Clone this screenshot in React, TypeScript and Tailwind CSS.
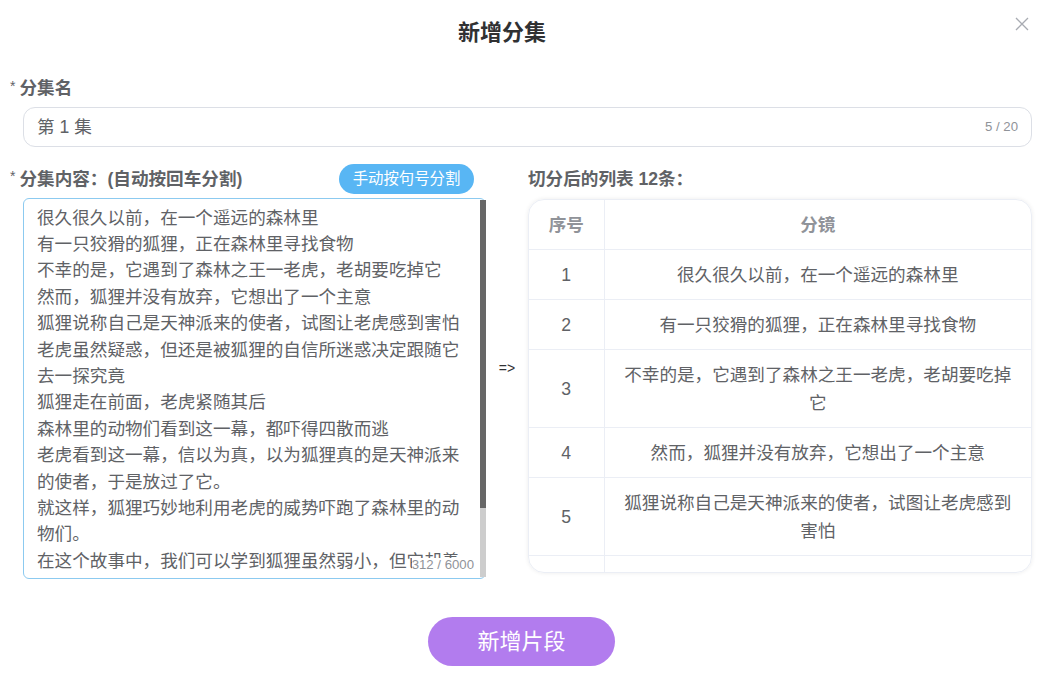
const story = [
  "很久很久以前，在一个遥远的森林里",
  "有一只狡猾的狐狸，正在森林里寻找食物",
  "不幸的是，它遇到了森林之王一老虎，老胡要吃掉它",
  "然而，狐狸并没有放弃，它想出了一个主意",
  "狐狸说称自己是天神派来的使者，试图让老虎感到害怕",
  "老虎虽然疑惑，但还是被狐狸的自信所迷惑决定跟随它去一探究竟",
  "狐狸走在前面，老虎紧随其后",
  "森林里的动物们看到这一幕，都吓得四散而逃",
  "老虎看到这一幕，信以为真，以为狐狸真的是天神派来的使者，于是放过了它。",
  "就这样，狐狸巧妙地利用老虎的威势吓跑了森林里的动物们。",
  "在这个故事中，我们可以学到狐狸虽然弱小，但它却善于利用自己的智慧和勇气，成功地化解了危机。",
  "这个故事告诉我们，聪明才智往往比蛮力更加重要，遇到困难时不要慌张。",
];

export default function App() {
  return (
    <div
      className="w-[1052px] h-[685px] bg-white relative overflow-hidden text-[#606266]"
      style={{ fontFamily: '"Liberation Sans", "Noto Sans CJK SC", sans-serif' }}
    >
      {/* 标题 */}
      <div className="h-[64px] flex items-center justify-center pr-[48px]">
        <h1 className="text-[22px] font-bold text-[#303133]">新增分集</h1>
      </div>
      <button className="absolute top-[16px] right-[22px] w-[16px] h-[16px] text-[#a8abb2]">
        <svg viewBox="0 0 16 16" width="16" height="16" fill="none" stroke="currentColor" strokeWidth="1.3">
          <path d="M2 2 L14 14 M14 2 L2 14" />
        </svg>
      </button>

      {/* 分集名 */}
      <div className="mt-[12px] pl-[10px] flex items-center leading-[24px]">
        <span className="text-[14px] mr-[4px] -mt-[4px]">*</span>
        <span className="text-[17.6px] font-bold">分集名</span>
      </div>
      <div className="mt-[7px] ml-[23px] w-[1009px] h-[40px] rounded-[12px] border border-[#dcdfe6] flex items-center justify-between px-[13px]">
        <span className="text-[17.6px]">第 1 集</span>
        <span className="text-[13.2px] text-[#909399]">5 / 20</span>
      </div>

      {/* 分集内容 */}
      <div className="mt-[17px] flex items-start">
        <div className="w-[486px] flex flex-col">
          <div className="h-[30px] pl-[10px] pr-[12px] flex items-center justify-between">
            <div className="flex items-center">
              <span className="text-[14px] mr-[4px] -mt-[4px]">*</span>
              <span className="text-[17.6px] font-bold">分集内容：(自动按回车分割)</span>
            </div>
            <button className="h-[30px] w-[135px] rounded-full bg-[#58b6f4] text-white text-[15.4px]">
              手动按句号分割
            </button>
          </div>
          <div className="relative mt-[4px] ml-[23px] w-[463px] h-[381px]">
            <textarea
              className="w-full h-full resize-none overflow-hidden rounded-[6px] border border-[#8ccaf0] outline-none pt-[5.5px] pb-[5.5px] pl-[13px] pr-[13px] text-[17.6px] leading-[26.4px] text-[#606266]"
              defaultValue={story.join("\n")}
            />
            {/* 滚动条 */}
            <div className="absolute right-0 top-[2px] w-[6px] h-[308px] bg-[#676767]" />
            <div className="absolute right-0 top-[310px] bottom-[2px] w-[6px] bg-[#cdcdcd]" />
            <span className="absolute right-[12px] bottom-[7px] bg-white leading-[14px] text-[13.2px] text-[#909399]">
              312 / 6000
            </span>
          </div>
        </div>

        <div className="w-[42px] self-center flex justify-center mb-[7px] text-[14px] text-[#303133]">=&gt;</div>

        <div className="w-[504px] flex flex-col">
          <div className="h-[30px] flex items-center">
            <span className="text-[17.6px] font-bold">切分后的列表 12条：</span>
          </div>
          <div className="mt-[5px] h-[374px] rounded-[16px] border border-[#ebeef5] shadow-[0_0_4px_rgba(0,0,0,0.08)] overflow-hidden">
            <table className="w-full border-collapse text-[17.6px] leading-[28px]">
              <thead>
                <tr className="border-b border-[#ebeef5]">
                  <th className="w-[75px] py-[10.5px] border-r border-[#ebeef5] font-bold text-[#909399]">序号</th>
                  <th className="py-[10.5px] font-bold text-[#909399]">分镜</th>
                </tr>
              </thead>
              <tbody>
                {story.map((line, i) => (
                  <tr key={i} className="border-b border-[#ebeef5]">
                    <td className="py-[10.5px] text-center border-r border-[#ebeef5]">{i + 1}</td>
                    <td className="py-[10.5px] px-[16px] text-center">{line}</td>
                  </tr>
                ))}
              </tbody>
            </table>
          </div>
        </div>
      </div>

      {/* 底部按钮 */}
      <div className="mt-[38px] flex justify-center pr-[9px]">
        <button className="w-[187px] h-[49px] rounded-full bg-[#b27cee] text-white text-[22px]">
          新增片段
        </button>
      </div>
    </div>
  );
}
